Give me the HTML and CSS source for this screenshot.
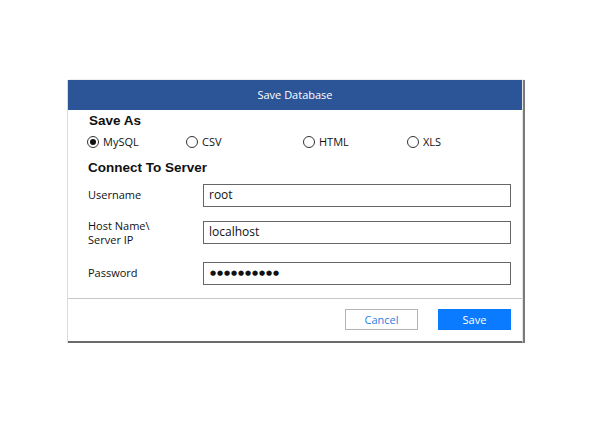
FILE: index.html
```html
<!DOCTYPE html>
<html lang="en">
<head>
<meta charset="utf-8">
<title>Save Database</title>
<link rel="stylesheet" href="styles.css">
</head>
<body>
<div class="dialog">
  <div class="dialog-header">Save Database</div>
  <div class="dialog-body">
    <div class="heading heading-saveas">Save As</div>
    <div class="radios">
      <label class="radio"><span class="radio-dot checked"></span><span class="radio-text">MySQL</span></label>
      <label class="radio"><span class="radio-dot"></span><span class="radio-text">CSV</span></label>
      <label class="radio"><span class="radio-dot"></span><span class="radio-text">HTML</span></label>
      <label class="radio"><span class="radio-dot"></span><span class="radio-text">XLS</span></label>
    </div>
    <div class="heading heading-connect">Connect To Server</div>
    <div class="form">
      <div class="form-row">
        <div class="form-label">Username</div>
        <div class="field">root</div>
      </div>
      <div class="form-row form-row-tall">
        <div class="form-label form-label-multi">Host Name\<br>Server IP</div>
        <div class="field">localhost</div>
      </div>
      <div class="form-row">
        <div class="form-label">Password</div>
        <div class="field field-password">●●●●●●●●●●</div>
      </div>
    </div>
  </div>
  <div class="dialog-footer">
    <button class="btn btn-cancel">Cancel</button>
    <button class="btn btn-save">Save</button>
  </div>
</div>
</body>
</html>
```
FILE: styles.css
```css
html, body {
  margin: 0;
  padding: 0;
  background: #ffffff;
}
body {
  padding: 80px 0 0 68px;
  font-family: "Open Sans", "Noto Sans", sans-serif;
  color: #1a1a1a;
}
.dialog {
  width: 454px;
  background: #ffffff;
  border-right: 1px solid #e2e2e2;
  border-bottom: 2px solid #6a6a6a;
  box-shadow: -1px 0 0 #dcdcdc, 2px 0 0 #7a7a7a, 1px 0 1px #9a9a9a;
}
.dialog-header {
  height: 30px;
  background: #2c5598;
  color: #ffffff;
  font-size: 11px;
  line-height: 30px;
  text-align: center;
}
.dialog-body {
  padding: 3px 11px 13px 20px;
  border-bottom: 1px solid #c8c8c8;
}
.heading {
  font-family: "Liberation Sans", Arial, sans-serif;
  font-weight: bold;
  font-size: 13.5px;
  line-height: 16px;
  color: #111111;
}
.heading-saveas {
  margin-left: 1px;
}
.heading-connect {
  margin-top: 10px;
}
.radios {
  margin-top: 5px;
  height: 16px;
  display: grid;
  grid-template-columns: 99px 117px 104px auto;
  margin-left: -1px;
}
.radio {
  display: flex;
  align-items: center;
  gap: 4px;
  font-size: 11px;
  line-height: 14px;
  color: #111111;
}
.radio-text {
  margin-top: -1px;
}
.radio-dot {
  width: 10px;
  height: 10px;
  border: 1px solid #333333;
  border-radius: 50%;
  display: flex;
  align-items: center;
  justify-content: center;
  box-sizing: content-box;
}
.radio-dot.checked::after {
  content: "";
  width: 6px;
  height: 6px;
  border-radius: 50%;
  background: #111111;
}
.form {
  margin-top: 8px;
  display: flex;
  flex-direction: column;
  gap: 14px;
}
.form-row {
  display: grid;
  grid-template-columns: 115px 308px;
  align-items: center;
  height: 23px;
}
.form-row-tall {
  height: 27px;
  align-items: start;
}
.form-label {
  font-size: 11px;
  line-height: 14px;
  color: #111111;
  margin-top: -2px;
}
.form-label-multi {
  margin-top: -2px;
  line-height: 13.5px;
}
.field {
  box-sizing: border-box;
  height: 23px;
  border: 1px solid #666666;
  padding: 0 5px;
  font-size: 12px;
  line-height: 19px;
  color: #111111;
}
.field-password {
  font-family: "DejaVu Sans", sans-serif;
  font-size: 7px;
  line-height: 21px;
  letter-spacing: 0.9px;
  padding-left: 6px;
}
.dialog-footer {
  display: flex;
  justify-content: flex-end;
  gap: 20px;
  padding: 10px 11px 11px;
}
.btn {
  width: 73px;
  height: 21px;
  box-sizing: border-box;
  font-family: "Open Sans", "Noto Sans", sans-serif;
  font-size: 11px;
  padding: 0;
  cursor: pointer;
}
.btn-cancel {
  background: #ffffff;
  border: 1px solid #b4b4b4;
  color: #2d7de0;
}
.btn-save {
  background: #0a7aff;
  border: 1px solid #0a7aff;
  color: #ffffff;
}
```
